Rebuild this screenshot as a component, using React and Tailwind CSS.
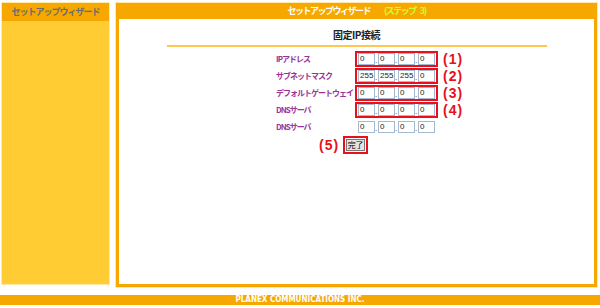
import React from 'react';

const rows = [
    { label: 'IPアドレス', values: ['0', '0', '0', '0'], mark: '(1)' },
    { label: 'サブネットマスク', values: ['255', '255', '255', '0'], mark: '(2)' },
    { label: 'デフォルトゲートウェイ', values: ['0', '0', '0', '0'], mark: '(3)' },
    { label: 'DNSサーバ', values: ['0', '0', '0', '0'], mark: '(4)' },
    { label: 'DNSサーバ', values: ['0', '0', '0', '0'], mark: null },
];

const font = { fontFamily: '"Noto Sans CJK JP", "Liberation Sans", sans-serif' };

const IpFields = ({ values }) => (
    <div className="flex items-center">
        {values.map((v, i) => (
            <React.Fragment key={i}>
                {i > 0 && <span className="w-[3px] text-[8px] leading-none text-gray-500 flex items-end h-[11px]">.</span>}
                <div className="w-[17px] h-[12px] border border-[#a5b9d1] bg-white text-[8px] leading-[10px] pl-[1px] text-[#222] font-['Liberation_Sans',sans-serif]">
                    {v}
                </div>
            </React.Fragment>
        ))}
    </div>
);

const App = () => {
    return (
        <div className="w-[600px] h-[308px] bg-white relative overflow-hidden" style={font}>
            <div className="flex pt-[3px] pl-[2px] gap-[7px]">
                {/* left menu */}
                <div className="w-[107px] h-[281px] bg-[#ffcc33] outline outline-1 outline-[#ffe8a8]">
                    <div className="h-[18px] bg-[#f7a800] flex items-center justify-center text-[9px] font-bold text-[#6b6b6b] whitespace-nowrap tracking-[-1px]">
                        セットアップウィザード
                    </div>
                </div>

                {/* main panel */}
                <div className="w-[481px] h-[284px] flex flex-col outline outline-1 outline-[#ffe8a8]">
                    <div className="h-[16px] bg-[#f7a800] flex items-center justify-center text-[9px] font-bold text-white whitespace-nowrap tracking-[-1.5px]">
                        <span>セットアップウィザード</span>
                        <span className="ml-[14px] text-[#ccff33]">(ステップ<span className="ml-[4px]">3)</span></span>
                    </div>
                    <div className="flex-1 bg-white border-[3px] border-t-0 border-[#f7a800] flex flex-col items-center">
                        <div className="mt-[9px] text-[10px] font-bold text-[#222] leading-[14px] tracking-[-0.5px]">固定IP接続</div>
                        <div className="mt-[3px] w-[380px] h-[2px] bg-[#ffc653]" />
                        <div className="mt-[3px] self-start ml-[157px] flex flex-col">
                            {rows.map((r, i) => (
                                <div key={i} className="flex items-center h-[17px]">
                                    <div className="w-[79px] text-[8px] font-bold text-[#993399] whitespace-nowrap leading-none tracking-[-1px]">
                                        {r.label}
                                    </div>
                                    <div className={r.mark ? 'border-2 border-[#e8101a] px-[1px]' : 'px-[3px]'}>
                                        <IpFields values={r.values} />
                                    </div>
                                    {r.mark && (
                                        <span className="ml-[5px] text-[14px] font-bold text-[#e8101a] leading-[14px] tracking-[1px] font-['Liberation_Sans',sans-serif]">{r.mark}</span>
                                    )}
                                </div>
                            ))}
                        </div>
                        <div className="mt-[1px] self-start ml-[200px] flex items-center">
                            <span className="text-[14px] font-bold text-[#e8101a] leading-[14px] tracking-[1px] mr-[4px] font-['Liberation_Sans',sans-serif]">(5)</span>
                            <div className="border-2 border-[#e8101a] p-[1px]">
                                <button className="w-[19px] h-[12px] bg-[#e4e4e4] border border-[#777] text-[8px] leading-none text-black flex items-center justify-center">
                                    完了
                                </button>
                            </div>
                        </div>
                    </div>
                </div>
            </div>

            <div className="absolute left-0 top-[295px] w-[600px] h-[10px] bg-[#f7a800] flex items-center justify-center text-[8px] font-bold text-white leading-none font-['DejaVu_Sans_Condensed',sans-serif]">
                PLANEX COMMUNICATIONS INC.
            </div>
        </div>
    );
};

export default App;
